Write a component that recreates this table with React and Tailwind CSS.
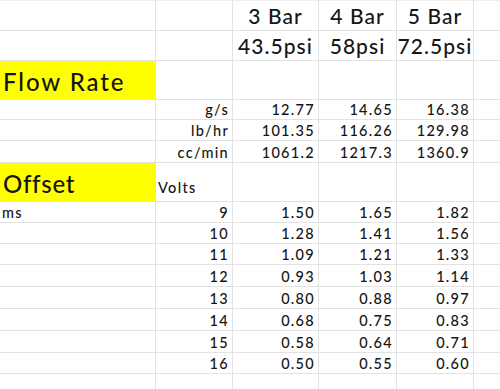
const cols = ['w-[156px]', 'w-[77px]', 'w-[86px]', 'w-[78px]', 'w-[77px]', 'w-[26px]'];

const flow = [
  ['g/s', '12.77', '14.65', '16.38'],
  ['lb/hr', '101.35', '116.26', '129.98'],
  ['cc/min', '1061.2', '1217.3', '1360.9'],
];

const offset = [
  ['9', '1.50', '1.65', '1.82'],
  ['10', '1.28', '1.41', '1.56'],
  ['11', '1.09', '1.21', '1.33'],
  ['12', '0.93', '1.03', '1.14'],
  ['13', '0.80', '0.88', '0.97'],
  ['14', '0.68', '0.75', '0.83'],
  ['15', '0.58', '0.64', '0.71'],
  ['16', '0.50', '0.55', '0.60'],
];

const flowHeights = ['h-[20px]', 'h-[21px]', 'h-[22px]'];
const offsetHeights = ['h-[21px]', 'h-[21px]', 'h-[21px]', 'h-[22px]', 'h-[22px]', 'h-[22px]', 'h-[22px]', 'h-[21px]'];

function Cell({ i, className = '', children }) {
  return (
    <div className={`${cols[i]} shrink-0 flex items-end border-b border-[#e2e2e2] ${i < 5 ? 'border-r' : ''} ${className}`}>
      {children}
    </div>
  );
}

function Num({ children }) {
  return <span className="ml-auto pr-[3px] pb-[2px] text-[14.5px] leading-none tracking-[0.09em]">{children}</span>;
}

function Big({ children, wide }) {
  return (
    <span className={`pl-[3px] pb-[5px] text-[24px] leading-none ${wide ? 'tracking-[0.08em]' : 'tracking-[0.03em]'}`}>
      {children}
    </span>
  );
}

function Head({ children }) {
  return <span className="mx-auto pb-[4px] text-[21px] leading-none tracking-[0.05em]">{children}</span>;
}

export default function App() {
  return (
    <div className="w-[500px] h-[389px] overflow-hidden bg-white text-[#151515] font-medium font-['Lato',sans-serif]">
      <div className="flex h-[31px] border-t border-[#eeeeee]">
        <Cell i={0} /><Cell i={1} />
        <Cell i={2}><Head>3 Bar</Head></Cell>
        <Cell i={3}><Head>4 Bar</Head></Cell>
        <Cell i={4}><Head>5 Bar</Head></Cell>
        <Cell i={5} />
      </div>
      <div className="flex h-[30px]">
        <Cell i={0} /><Cell i={1} />
        <Cell i={2}><Head>43.5psi</Head></Cell>
        <Cell i={3}><Head>58psi</Head></Cell>
        <Cell i={4}><Head>72.5psi</Head></Cell>
        <Cell i={5} />
      </div>
      <div className="flex h-[39px]">
        <Cell i={0} className="bg-[#ffff00] border-b-[#ffff00]"><Big wide>Flow Rate</Big></Cell>
        <Cell i={1} /><Cell i={2} /><Cell i={3} /><Cell i={4} /><Cell i={5} />
      </div>
      {flow.map((r, k) => (
        <div key={r[0]} className={`flex ${flowHeights[k]}`}>
          <Cell i={0} />
          <Cell i={1}><Num>{r[0]}</Num></Cell>
          <Cell i={2}><Num>{r[1]}</Num></Cell>
          <Cell i={3}><Num>{r[2]}</Num></Cell>
          <Cell i={4}><Num>{r[3]}</Num></Cell>
          <Cell i={5} />
        </div>
      ))}
      <div className="flex h-[39px]">
        <Cell i={0} className="bg-[#ffff00] border-b-[#ffff00]"><Big>Offset</Big></Cell>
        <Cell i={1}>
          <span className="pl-[2px] pb-[6px] text-[14.5px] leading-none tracking-[0.09em]">Volts</span>
        </Cell>
        <Cell i={2} /><Cell i={3} /><Cell i={4} /><Cell i={5} />
      </div>
      {offset.map((r, k) => (
        <div key={r[0]} className={`flex ${offsetHeights[k]}`}>
          <Cell i={0}>
            {k === 0 && <span className="pl-[2px] pb-[2px] text-[14.5px] leading-none tracking-[0.09em]">ms</span>}
          </Cell>
          <Cell i={1}><Num>{r[0]}</Num></Cell>
          <Cell i={2}><Num>{r[1]}</Num></Cell>
          <Cell i={3}><Num>{r[2]}</Num></Cell>
          <Cell i={4}><Num>{r[3]}</Num></Cell>
          <Cell i={5} />
        </div>
      ))}
      <div className="flex h-[16px]">
        <Cell i={0} className="border-b-0" /><Cell i={1} className="border-b-0" />
        <Cell i={2} className="border-b-0" /><Cell i={3} className="border-b-0" />
        <Cell i={4} className="border-b-0" /><Cell i={5} className="border-b-0" />
      </div>
    </div>
  );
}
